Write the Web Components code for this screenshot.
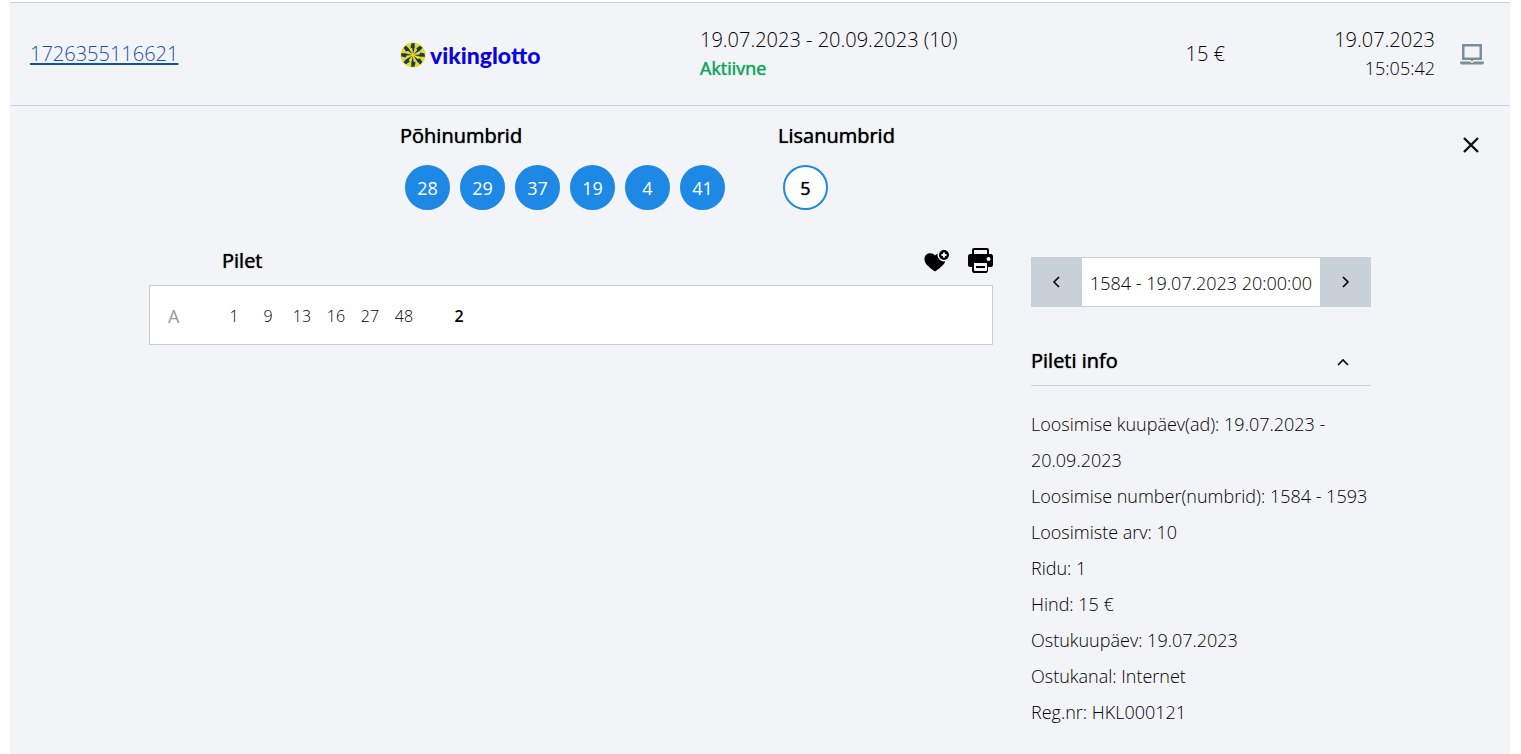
<!DOCTYPE html>
<html lang="et">
<head>
<meta charset="utf-8">
<meta name="viewport" content="width=device-width, initial-scale=1">
<title>Vikinglotto pilet</title>
<style>
  body {
    margin: 0;
    padding: 2px 10px 0;
    background: #fff;
    color: #000;
    font-family: "Open Sans", "Noto Sans", sans-serif;
    font-weight: 300;
    font-size: 18px;
    line-height: 28px;
    --heading-shadow: 0 0 1px currentColor;
  }
</style>
</head>
<body>
<wc-ticket></wc-ticket>

<script>
  class wcBase extends HTMLElement {
    constructor() {
      super();
      this.attachShadow({ mode: 'open' });
    }

    connectedCallback() {
      const template = document.createElement('template');
      template.innerHTML = this.getStyle() + this.getTemplate();
      this.shadowRoot.appendChild(template.content.cloneNode(true));
    }
  }

  // Vikinglotto wheel and wordmark
  class wcLogo extends wcBase {
    getTemplate() {
      let blades = '';
      for (let i = 0; i < 8; i++) {
        blades += `<path transform="rotate(${i * 45 + 4} 13 13)" d="M13 12 12 6.5 10 6 10.600 1.600 13.800 1 14.200 5Z"/>`;
      }
      return `
        <svg width="26" height="26" viewBox="0 0 26 26" aria-hidden="true">
          <circle cx="13" cy="13" r="12.500" fill="#f0d62c"/>
          <g fill="#0d3f5c">${blades}</g>
        </svg>
        <span>vikinglotto</span>
      `;
    }

    getStyle() {
      return `
        <style>
          :host { display: flex; align-items: center; gap: 4px; padding-top: 2px; }
          span {
            color: #0a05e0;
            font-family: Lato, sans-serif;
            font-weight: 900;
            font-size: 23px;
            line-height: 28px;
          }
        </style>
      `;
    }
  }

  class wcTicketRow extends wcBase {
    getTemplate() {
      return `
        <a href="#"><slot name="number"></slot></a>
        <slot name="game"></slot>
        <div>
          <div class="large"><slot name="period"></slot></div>
          <div class="status"><slot name="status"></slot></div>
        </div>
        <div class="large right"><slot name="price"></slot></div>
        <div class="right">
          <div class="large"><slot name="date"></slot></div>
          <div><slot name="time"></slot></div>
        </div>
        <svg width="24" height="22" viewBox="0 0 24 22" role="img" aria-label="Internet">
          <path fill="none" stroke="#7f8d9a" stroke-width="2.500" d="M3.250 2.250h17.500v13.500H3.250z"/>
          <path fill="#7f8d9a" d="M1 18.500h9l1 1h2l1-1h9q1 0 1 1 0 2-2 2H2q-2 0-2-2 0-1 1-1zM11 16h2v2h-2z"/>
        </svg>
      `;
    }

    getStyle() {
      return `
        <style>
          :host {
            display: grid;
            grid-template-columns: 370fr 300fr 360fr 165fr 210fr 49px;
            align-items: center;
            padding: 23px 26px 23px 20px;
            border-top: 1px solid #ccd1dc;
            border-bottom: 1px solid #ccd1dc;
          }
          a { color: #1350a8; font-size: 20px; text-underline-offset: 2px; text-decoration-thickness: 2px; }
          .large { font-size: 20px; }
          .status { color: #14a35c; font-weight: 400; text-shadow: var(--heading-shadow); }
          .right { text-align: right; }
          svg { justify-self: end; }
        </style>
      `;
    }
  }

  class wcBall extends wcBase {
    getTemplate() {
      return `<slot></slot>`;
    }

    getStyle() {
      return `
        <style>
          :host {
            display: flex;
            align-items: center;
            justify-content: center;
            box-sizing: border-box;
            width: 45px;
            height: 45px;
            border: 2px solid #1e88e5;
            border-radius: 50%;
            background: #1e88e5;
            color: #fff;
            font-weight: 400;
          }
          :host([extra]) { background: #fff; color: #000; text-shadow: var(--heading-shadow); }
        </style>
      `;
    }
  }

  class wcBallGroup extends wcBase {
    getTemplate() {
      return `
        <h2>${this.getAttribute('heading')}</h2>
        <div class="balls"><slot></slot></div>
      `;
    }

    getStyle() {
      return `
        <style>
          :host { display: block; }
          h2 { margin: 0 0 15px; font-size: 20px; font-weight: 400; line-height: 28px; text-shadow: var(--heading-shadow); }
          .balls { display: flex; gap: 10px; padding: 0 5px; }
        </style>
      `;
    }
  }

  class wcLines extends wcBase {
    getTemplate() {
      return `
        <header>
          <h2>Pilet</h2>
          <button aria-label="Lisa lemmikutesse">
            <svg width="26" height="26" viewBox="0 0 26 26">
              <path d="M12 7.500C10 4.800 5 4.500 2.800 7.200C.4 10 1.500 14.500 4 17C6.500 19.500 9 21.500 12 23.500C15 21.500 17.500 19.500 20 17C22 15 22.700 13 22.300 11L17.500 10L15.500 5.500C14 5.700 12.800 6.400 12 7.500Z"/>
              <circle cx="21" cy="7" r="6.500" fill="#f3f4f8"/>
              <circle cx="21" cy="7" r="5"/>
              <path stroke="#fff" stroke-width="2" d="M21 4.500v5M18.500 7h5"/>
            </svg>
          </button>
          <button aria-label="Prindi">
            <svg width="26" height="26" viewBox="0 0 26 26">
              <path fill="none" stroke="#000" stroke-width="2" stroke-linejoin="round" d="M6 8V2q0-1 1-1h13q1 0 1 1v6"/>
              <path fill-rule="evenodd" d="M3 6h21q2 0 2 3v8q0 2-2 2h-3v3q0 3-2 3H7q-2 0-2-3v-3H3q-2 0-2-2V9q0-3 2-3zm4 9v7q0 1 1 1h11q1 0 1-1v-7zM21.500 9a2 2 0 1 0 .1 0z"/>
              <path stroke="#000" stroke-width="2" d="M9 19h9"/>
            </svg>
          </button>
        </header>
        <table>
          <tr>
            <th scope="row">A</th>
            <td>1</td><td>9</td><td>13</td><td>16</td><td>27</td><td>48</td>
            <td class="gap"></td>
            <td class="extra">2</td>
          </tr>
        </table>
      `;
    }

    getStyle() {
      return `
        <style>
          :host { display: block; }
          header { display: flex; align-items: center; height: 28px; margin-bottom: 10px; }
          h2 { flex: 1; margin: 0; padding-left: 73px; font-size: 20px; font-weight: 400; line-height: 28px; text-shadow: var(--heading-shadow); }
          button { display: flex; padding: 0; border: 0; background: none; cursor: pointer; }
          button + button { margin-left: 18px; }
          table {
            display: block;
            box-sizing: border-box;
            height: 60px;
            padding: 15px 18px;
            border: 1px solid #c8cdd2;
            background: #fff;
            border-spacing: 0;
          }
          th, td { box-sizing: border-box; padding: 0; text-align: center; font-size: 16px; line-height: 30px; }
          td { width: 34px; min-width: 34px; }
          th { width: 49px; min-width: 49px; color: #999; font-size: 18px; font-weight: 400; text-align: left; }
          .gap { width: 21px; min-width: 21px; }
          .extra { font-weight: 600; }
        </style>
      `;
    }
  }

  class wcDrawPicker extends wcBase {
    getTemplate() {
      return `
        <button aria-label="Eelmine loosimine">
          <svg width="12" height="14" viewBox="0 0 12 14"><path d="M8 2 3 7l5 5"/></svg>
        </button>
        <span><slot></slot></span>
        <button aria-label="Järgmine loosimine">
          <svg width="12" height="14" viewBox="0 0 12 14"><path d="m4 2 5 5-5 5"/></svg>
        </button>
      `;
    }

    getStyle() {
      return `
        <style>
          :host { display: flex; height: 48px; border: 1px solid #c8d0d8; background: #fff; }
          span { flex: 1; text-align: center; line-height: 50px; white-space: nowrap; }
          button {
            display: flex;
            align-items: center;
            justify-content: center;
            width: 50px;
            padding: 0;
            border: 0;
            background: #c8d0d8;
            cursor: pointer;
          }
          path { fill: none; stroke: #000; stroke-width: 1.600; }
        </style>
      `;
    }
  }

  class wcInfo extends wcBase {
    getTemplate() {
      return `
        <h2>
          <button aria-expanded="true">
            Pileti info
            <svg width="14" height="10" viewBox="0 0 14 10"><path fill="none" stroke="#000" stroke-width="1.600" d="m2 9 5-5 5 5"/></svg>
          </button>
        </h2>
        <slot></slot>
      `;
    }

    getStyle() {
      return `
        <style>
          :host { display: block; line-height: 36px; }
          h2 { margin: 0 0 20px; border-bottom: 1px solid #ccd1dc; }
          button {
            display: flex;
            align-items: center;
            justify-content: space-between;
            width: 100%;
            padding: 0 21px 10px 0;
            border: 0;
            background: none;
            color: inherit;
            font: inherit;
            font-size: 20px;
            font-weight: 400;
            line-height: 28px;
            text-shadow: var(--heading-shadow);
            cursor: pointer;
          }
          ::slotted(p) { margin: 0; }
        </style>
      `;
    }
  }

  class wcTicket extends wcBase {
    getTemplate() {
      return `
        <wc-ticket-row>
          <span slot="number">1726355116621</span>
          <wc-logo slot="game"></wc-logo>
          <span slot="period">19.07.2023 - 20.09.2023 (10)</span>
          <span slot="status">Aktiivne</span>
          <span slot="price">15 €</span>
          <span slot="date">19.07.2023</span>
          <span slot="time">15:05:42</span>
        </wc-ticket-row>
        <section class="draw">
          <wc-ball-group heading="Põhinumbrid">
            <wc-ball>28</wc-ball>
            <wc-ball>29</wc-ball>
            <wc-ball>37</wc-ball>
            <wc-ball>19</wc-ball>
            <wc-ball>4</wc-ball>
            <wc-ball>41</wc-ball>
          </wc-ball-group>
          <wc-ball-group heading="Lisanumbrid">
            <wc-ball extra>5</wc-ball>
          </wc-ball-group>
          <button aria-label="Sulge">
            <svg width="18" height="18" viewBox="0 0 18 18"><path stroke="#111" stroke-width="2.400" d="m2 2 14 14M16 2 2 16"/></svg>
          </button>
        </section>
        <section class="content">
          <wc-lines></wc-lines>
          <aside>
            <wc-draw-picker>1584 - 19.07.2023 20:00:00</wc-draw-picker>
            <wc-info>
              <p>Loosimise kuupäev(ad): 19.07.2023 - 20.09.2023</p>
              <p>Loosimise number(numbrid): 1584 - 1593</p>
              <p>Loosimiste arv: 10</p>
              <p>Ridu: 1</p>
              <p>Hind: 15 €</p>
              <p>Ostukuupäev: 19.07.2023</p>
              <p>Ostukanal: Internet</p>
              <p>Reg.nr: HKL000121</p>
            </wc-info>
          </aside>
        </section>
      `;
    }

    getStyle() {
      return `
        <style>
          :host {
            display: block;
            box-sizing: border-box;
            max-width: 1500px;
            min-height: calc(100vh - 2px);
            background: #f3f4f8;
          }
          .draw {
            display: flex;
            gap: 48px;
            padding: 16px 30px 0 26%;
          }
          .draw button {
            align-self: flex-start;
            display: flex;
            margin: 14px 0 0 auto;
            padding: 0;
            border: 0;
            background: none;
            cursor: pointer;
          }
          .content {
            display: grid;
            grid-template-columns: 1fr 340px;
            gap: 38px;
            max-width: 1222px;
            margin: 37px auto 0;
            padding-bottom: 20px;
          }
          aside { padding-top: 10px; }
          wc-info { margin-top: 40px; }
        </style>
      `;
    }
  }

  customElements.define('wc-logo', wcLogo);
  customElements.define('wc-ticket-row', wcTicketRow);
  customElements.define('wc-ball', wcBall);
  customElements.define('wc-ball-group', wcBallGroup);
  customElements.define('wc-lines', wcLines);
  customElements.define('wc-draw-picker', wcDrawPicker);
  customElements.define('wc-info', wcInfo);
  customElements.define('wc-ticket', wcTicket);
</script>
</body>
</html>
